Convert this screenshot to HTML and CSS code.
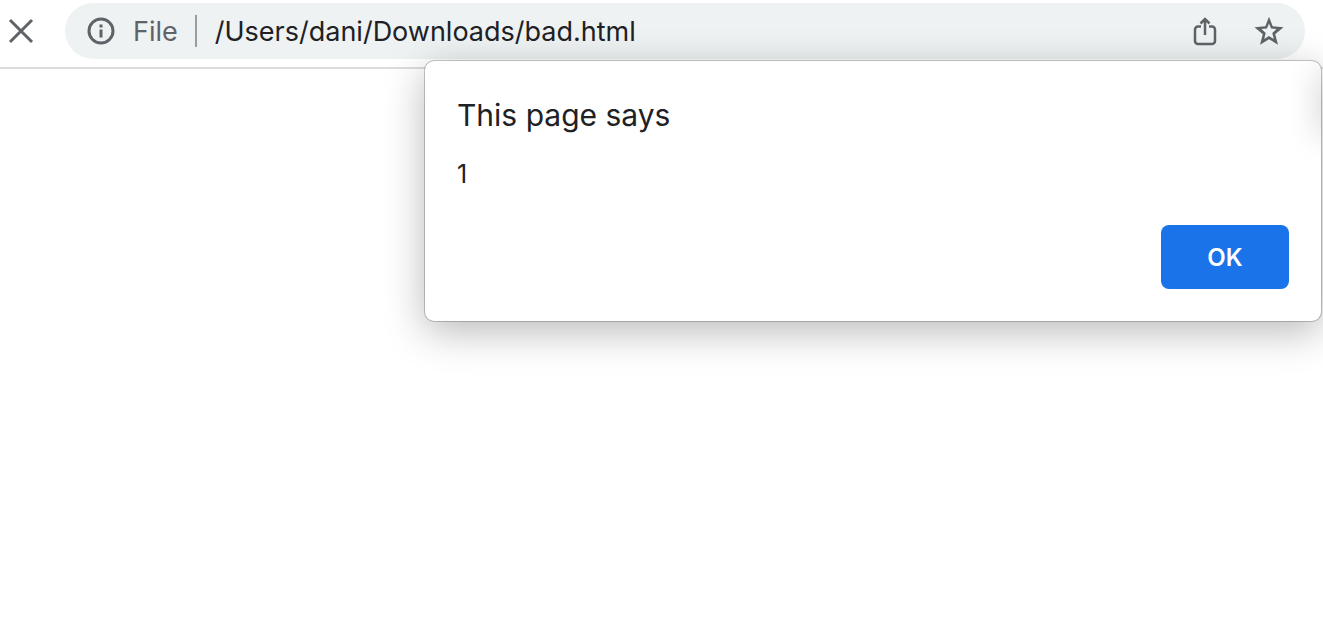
FILE: index.html
```
<!DOCTYPE html>
<html lang="en">
<head>
<meta charset="utf-8">
<title>bad.html</title>
<link rel="stylesheet" href="styles.css">
</head>
<body>
<header class="toolbar">
  <button class="icon-button" type="button" aria-label="Stop loading">
    <svg width="26" height="26" viewBox="0 0 26 26" fill="none" stroke="#5f6368" stroke-width="3" stroke-linecap="butt"><path d="M2 2 24 24M24 2 2 24"/></svg>
  </button>
  <div class="omnibox">
    <button class="site-info" type="button">
      <svg width="28" height="28" viewBox="0 0 28 28"><circle cx="14" cy="14" r="12" fill="none" stroke="#5f6368" stroke-width="3"/><path d="M12.5 7.5h3v3h-3zM12.5 12.5h3v8h-3z" fill="#5f6368"/></svg>
      <span>File</span>
    </button>
    <input class="address" type="text" aria-label="Address" value="/Users/dani/Downloads/bad.html">
    <div class="actions">
      <button class="icon-button" type="button" aria-label="Share">
        <svg width="28" height="30" viewBox="0 0 28 30" fill="none" stroke="#5f6368" stroke-width="2.500"><path d="M10 10.500H7a3 3 0 0 0-3 3V25a3 3 0 0 0 3 3h14a3 3 0 0 0 3-3V13.500a3 3 0 0 0-3-3H18M14 19V3M9.500 7.500 14 3l4.500 4.500"/></svg>
      </button>
      <button class="icon-button" type="button" aria-label="Bookmark">
        <svg width="30" height="30" viewBox="0 0 30 30" fill="#5f6368" fill-rule="evenodd"><path d="M15 .7 18.700 10.300 29.500 11.300 21.200 18.300 24 28.700 15 23.200 6 28.700 8.800 18.300.5 11.300 11.300 10.300ZM15 7.400 13 12.500 7.500 13 11.700 16.900 10.200 23 15 20 19.800 23 18.300 16.900 22.500 13 17 12.500Z"/></svg>
      </button>
    </div>
  </div>
</header>
<main class="page">
  <section class="dialog" role="alertdialog" aria-labelledby="dialog-title" aria-describedby="dialog-message">
    <h1 class="dialog-title" id="dialog-title">This page says</h1>
    <p class="dialog-message" id="dialog-message">1</p>
    <div class="dialog-actions"><button class="ok" type="button">OK</button></div>
  </section>
</main>
</body>
</html>
```
FILE: styles.css
```
* { box-sizing: border-box; }

body {
  display: flex;
  flex-direction: column;
  min-height: 100vh;
  margin: 0;
  background: #fff;
  color: #202124;
  font-family: Inter, "Liberation Sans", sans-serif;
}

button, input {
  margin: 0;
  padding: 0;
  border: 0;
  background: none;
  color: inherit;
  font: inherit;
}

svg { display: block; }

.toolbar {
  display: flex;
  align-items: center;
  gap: 31px;
  padding: 3px 18px 8px 8px;
  border-bottom: 2px solid #dadcdd;
}

.icon-button { flex: none; }

.omnibox {
  flex: 1;
  min-width: 0;
  height: 56px;
  display: flex;
  align-items: center;
  gap: 18px;
  padding: 0 21px 0 22px;
  border-radius: 28px;
  background: #eef2f3;
  font-size: 27px;
}

.site-info {
  display: flex;
  align-items: center;
  gap: 18px;
  height: 32px;
  padding-right: 17px;
  border-right: 2px solid #9a9da0;
  color: #5f6368;
}

.address {
  flex: 1;
  min-width: 0;
  height: 40px;
  outline: 0;
}

.actions {
  display: flex;
  align-items: center;
  gap: 35px;
}

.page {
  position: relative;
  flex: 1;
}

.dialog {
  position: absolute;
  top: -8px;
  right: 2px;
  width: 896px;
  max-width: calc(100% - 4px);
  padding: 32px;
  overflow: hidden;
  border-radius: 9px;
  background: #fff;
  box-shadow: 0 0 0 1px #00000030, 0 0 1px #00000030, 0 10px 40px #00000048;
}

/* soft shade falling on the right edge */
.dialog::after {
  content: "";
  position: absolute;
  top: 10px;
  left: 100%;
  width: 20px;
  height: 64px;
  box-shadow: 0 0 32px #00000038;
}

.dialog-title {
  margin: 0 0 20px;
  font-size: 30px;
  line-height: 44px;
  font-weight: 400;
}

.dialog-message {
  margin: 0;
  font-size: 25px;
  line-height: 34px;
}

.dialog-actions {
  display: flex;
  justify-content: flex-end;
  margin-top: 34px;
}

.ok {
  width: 128px;
  height: 64px;
  border-radius: 8px;
  background: #1a73e8;
  color: #fff;
  font-size: 24px;
  font-weight: 600;
}
```
